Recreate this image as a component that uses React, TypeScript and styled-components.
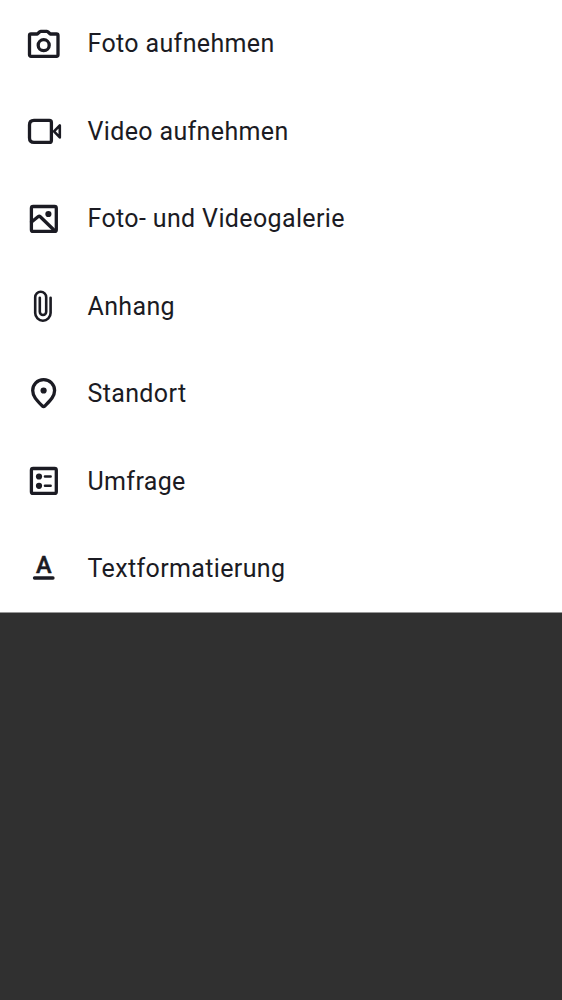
import React from "react";
import styled, { createGlobalStyle } from "styled-components";

const GlobalStyle = createGlobalStyle`
  body {
    margin: 0;
    background: #303030;
    font-family: Roboto, "Liberation Sans", sans-serif;
  }
`;

const Screen = styled.div`
  min-height: 1000px;
  background: #303030;
`;

const Sheet = styled.ul`
  box-sizing: border-box;
  height: 613px;
  margin: 0;
  padding: 0;
  list-style: none;
  background: #fff;
  color: #1b1b23;
  border-bottom: 1px solid #979797;
`;

const Item = styled.li`
  display: flex;
  align-items: center;
  gap: 19.5px;
  height: 87.5px;
  padding-left: 20px;
`;

const Icon = styled.svg.attrs({ viewBox: "0 0 48 48", "aria-hidden": true })`
  flex: none;
  width: 48px;
  height: 48px;
  fill: none;
  stroke: currentColor;
  stroke-width: 3.3;
  stroke-linecap: round;
  stroke-linejoin: round;
`;

const ThinPath = styled.path`
  stroke-width: 2.6px;
`;

const IconLetter = styled.text`
  fill: currentColor;
  stroke: currentColor;
  stroke-width: 0.5px;
  font-size: 23.5px;
  font-weight: 500;
  text-anchor: middle;
`;

const Label = styled.span`
  font-size: 25px;
  line-height: 37px;
  letter-spacing: 0.36px;
  white-space: nowrap;
`;

const CameraIcon = () => (
  <Icon>
    <path d="M11 14H17.3L19.8 11.7Q20.2 11.4 20.8 11.4H26.8Q27.4 11.4 27.8 11.7L30.3 14H36.5Q38 14 38 15.5V34.8Q38 36.3 36.5 36.3H11Q9.5 36.3 9.5 34.8V15.5Q9.5 14 11 14Z" />
    <circle cx="23.7" cy="25.2" r="5.5" />
  </Icon>
);

const VideoIcon = () => (
  <Icon>
    <path d="M14 13.4H29.4Q31.4 13.4 31.4 15.4V33.4Q31.4 35.4 29.4 35.4H14Q9.5 35.4 9.5 31V18Q9.5 13.4 14 13.4Z" />
    <ThinPath d="M34 24.4L39.8 18.4V30.4Z" />
  </Icon>
);

const GalleryIcon = () => (
  <Icon>
    <rect x="11.4" y="11.5" width="24.9" height="24.9" rx="1.7" />
    <path d="M11.5 27L18.3 21.5Q19.3 20.8 20.3 21.7L35 36" />
    <circle cx="28.4" cy="19" r="3.1" fill="currentColor" stroke="none" />
  </Icon>
);

const ClipIcon = () => (
  <Icon>
    <ThinPath d="M30.6 15.7V31A7.7 7.7 0 0 1 15.2 31V15.2A5.5 5.5 0 0 1 26.2 15.2V29.8A3.2 3.2 0 0 1 19.8 29.8V15.7" />
  </Icon>
);

const PinIcon = () => (
  <Icon>
    <path d="M23.6 9.7C17.2 9.7 12.7 14.4 12.7 20.6C12.7 26.5 17.2 30.7 22.4 36Q23.6 37.2 24.8 36C30 30.7 34.6 26.5 34.6 20.6C34.6 14.4 30 9.7 23.6 9.7Z" />
    <circle cx="23.6" cy="20.5" r="3.1" fill="currentColor" stroke="none" />
  </Icon>
);

const PollIcon = () => (
  <Icon>
    <rect x="11.4" y="11.5" width="24.9" height="24.9" rx="1.7" />
    <circle cx="19" cy="19.5" r="3.1" fill="currentColor" stroke="none" />
    <circle cx="19" cy="28.8" r="3.1" fill="currentColor" stroke="none" />
    <ThinPath d="M25 19.5H30.6M25 28.8H30.6" />
  </Icon>
);

const TextIcon = () => (
  <Icon>
    <IconLetter x="23.7" y="28">A</IconLetter>
    <path d="M14.5 33H33" />
  </Icon>
);

const items = [
  { label: "Foto aufnehmen", Glyph: CameraIcon },
  { label: "Video aufnehmen", Glyph: VideoIcon },
  { label: "Foto- und Videogalerie", Glyph: GalleryIcon },
  { label: "Anhang", Glyph: ClipIcon },
  { label: "Standort", Glyph: PinIcon },
  { label: "Umfrage", Glyph: PollIcon },
  { label: "Textformatierung", Glyph: TextIcon },
];

export default function App() {
  return (
    <>
      <GlobalStyle />
      <Screen>
        <Sheet>
          {items.map(({ label, Glyph }) => (
            <Item key={label}>
              <Glyph />
              <Label>{label}</Label>
            </Item>
          ))}
        </Sheet>
      </Screen>
    </>
  );
}
